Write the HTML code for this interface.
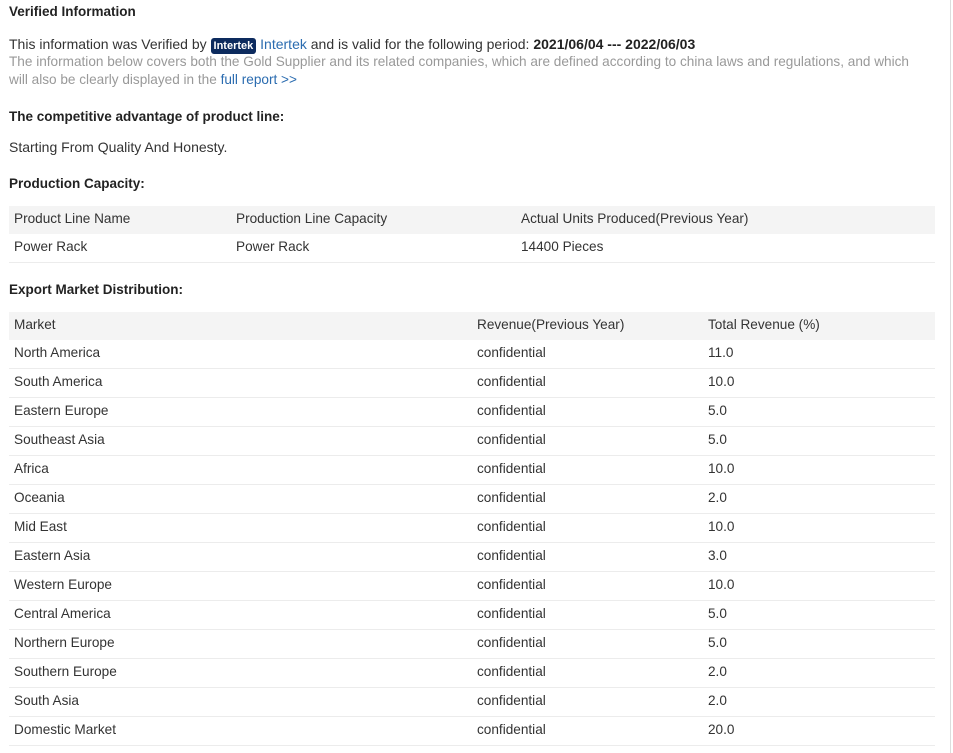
<!DOCTYPE html>
<html><head><meta charset="utf-8"><style>
body{margin:0;background:#fff;font-family:"Liberation Sans",Arial,sans-serif;color:#333;width:953px;height:753px;overflow:hidden;position:relative}
.vline{position:absolute;left:950px;top:0;width:1px;height:753px;background:#ddd}
.a{position:absolute;white-space:nowrap;font-size:14px;line-height:16px}
b,.h{font-weight:bold;color:#222}
.h{font-size:13.5px}
.g{color:#999;font-size:13.6px}
.lk{color:#2b6cb0}
.badge{display:inline-block;background:#0d2b5e;color:#fff;font-size:11px;font-weight:bold;border-radius:3px;padding:1px 3px;line-height:14px;vertical-align:0px}
.row{position:absolute;left:9px;width:926px;border-bottom:1px solid #ececec}
.hd{background:#f4f4f4;border-bottom:none}
.row span{position:absolute;top:5px;font-size:13.6px;line-height:16px;white-space:nowrap}
</style></head><body>
<div class="vline"></div>
<div class="a h" style="left:9px;top:4px">Verified Information</div>
<div class="a" style="left:9px;top:36px">This information was Verified by <span class="badge">Intertek</span> <span class="lk">Intertek</span> and is valid for the following period: <b>2021/06/04 --- 2022/06/03</b></div>
<div class="a g" style="left:9px;top:54px">The information below covers both the Gold Supplier and its related companies, which are defined according to china laws and regulations, and which</div>
<div class="a g" style="left:9px;top:72px">will also be clearly displayed in the <span class="lk">full report &gt;&gt;</span></div>
<div class="a h" style="left:9px;top:109px">The competitive advantage of product line:</div>
<div class="a" style="left:9px;top:139px">Starting From Quality And Honesty.</div>
<div class="a h" style="left:9px;top:176px">Production Capacity:</div>
<div class="row hd" style="top:206px;height:28px"><span style="left:5px">Product Line Name</span><span style="left:227px">Production Line Capacity</span><span style="left:512px">Actual Units Produced(Previous Year)</span></div>
<div class="row" style="top:234px;height:28px"><span style="left:5px">Power Rack</span><span style="left:227px">Power Rack</span><span style="left:512px">14400 Pieces</span></div>
<div class="a h" style="left:9px;top:282px">Export Market Distribution:</div>
<div class="row hd" style="top:312px;height:28px"><span style="left:5px">Market</span><span style="left:468px">Revenue(Previous Year)</span><span style="left:699px">Total Revenue (%)</span></div>
<div class="row" style="top:340px;height:28px"><span style="left:5px">North America</span><span style="left:468px">confidential</span><span style="left:699px">11.0</span></div>
<div class="row" style="top:369px;height:28px"><span style="left:5px">South America</span><span style="left:468px">confidential</span><span style="left:699px">10.0</span></div>
<div class="row" style="top:398px;height:28px"><span style="left:5px">Eastern Europe</span><span style="left:468px">confidential</span><span style="left:699px">5.0</span></div>
<div class="row" style="top:427px;height:28px"><span style="left:5px">Southeast Asia</span><span style="left:468px">confidential</span><span style="left:699px">5.0</span></div>
<div class="row" style="top:456px;height:28px"><span style="left:5px">Africa</span><span style="left:468px">confidential</span><span style="left:699px">10.0</span></div>
<div class="row" style="top:485px;height:28px"><span style="left:5px">Oceania</span><span style="left:468px">confidential</span><span style="left:699px">2.0</span></div>
<div class="row" style="top:514px;height:28px"><span style="left:5px">Mid East</span><span style="left:468px">confidential</span><span style="left:699px">10.0</span></div>
<div class="row" style="top:543px;height:28px"><span style="left:5px">Eastern Asia</span><span style="left:468px">confidential</span><span style="left:699px">3.0</span></div>
<div class="row" style="top:572px;height:28px"><span style="left:5px">Western Europe</span><span style="left:468px">confidential</span><span style="left:699px">10.0</span></div>
<div class="row" style="top:601px;height:28px"><span style="left:5px">Central America</span><span style="left:468px">confidential</span><span style="left:699px">5.0</span></div>
<div class="row" style="top:630px;height:28px"><span style="left:5px">Northern Europe</span><span style="left:468px">confidential</span><span style="left:699px">5.0</span></div>
<div class="row" style="top:659px;height:28px"><span style="left:5px">Southern Europe</span><span style="left:468px">confidential</span><span style="left:699px">2.0</span></div>
<div class="row" style="top:688px;height:28px"><span style="left:5px">South Asia</span><span style="left:468px">confidential</span><span style="left:699px">2.0</span></div>
<div class="row" style="top:717px;height:28px"><span style="left:5px">Domestic Market</span><span style="left:468px">confidential</span><span style="left:699px">20.0</span></div>
</body></html>
